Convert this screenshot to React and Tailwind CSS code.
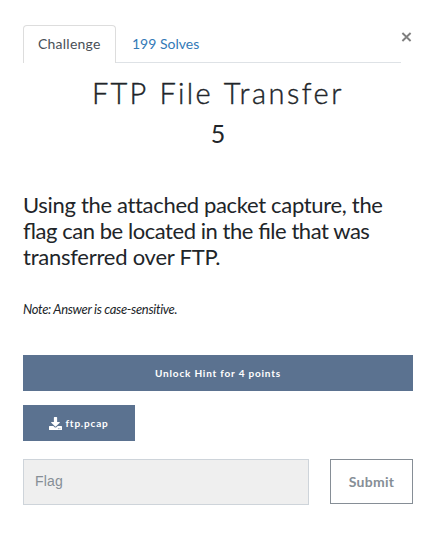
import { FaDownload } from "react-icons/fa";

export default function App() {
  return (
    <main className="h-[541px] w-[436px] overflow-hidden bg-white pl-[23px] pr-[23px] pt-[25px] font-['Lato',sans-serif] text-[#212529]">
      <header className="flex h-[38px]">
        <nav className="flex w-[378px] shrink-0 border-b border-[#dee2e6] text-[14px] leading-[21px]">
          <a className="-mb-px h-[38px] w-[93px] rounded-t-[4px] border border-b-0 border-[#dddddd] bg-white pl-[14px] pt-[7px] tracking-[0.23px] text-[#495057]">
            Challenge
          </a>
          <a className="pl-[16px] pt-[8px] text-[#337ab7]">199 Solves</a>
        </nav>
        <button className="-mt-[1px] flex h-[26px] w-[12px] shrink-0 items-center justify-start text-[#7f7f7f]" aria-label="Close">
          <svg className="h-[10px] w-[11px]" viewBox="0 0 11 10" fill="none" stroke="currentColor" strokeWidth="1.9">
            <path d="M1.4 1l8.2 8M9.6 1L1.4 9" />
          </svg>
        </button>
      </header>
      <h3 className="mt-[12px] whitespace-nowrap text-center text-[29px] font-light leading-[36px] [-webkit-text-stroke:0.4px_#212529] [word-spacing:3px]">
        <span className="tracking-[2.2px]">FTP</span>{" "}
        <span className="tracking-[2.3px]">File</span>{" "}
        <span className="tracking-[2.5px]">Transfer</span>
      </h3>
      <h4 className="mt-[6px] text-center text-[25px] leading-[32px]">5</h4>
      <p className="mt-[43px] whitespace-nowrap text-[22px] leading-[26px]">
        <span className="tracking-[-0.32px]">Using the attached packet capture, the</span>
        <br />
        <span className="tracking-[-0.45px]">
          <span className="[font-feature-settings:'liga']">fl</span>ag can be located in the{" "}
          <span className="[font-feature-settings:'liga']">fi</span>le that was
        </span>
        <br />
        <span className="tracking-[-0.24px]">transferred over FTP.</span>
      </p>
      <p className="mt-[29px] text-[13px] italic leading-[20px] tracking-[-0.33px]">Note: Answer is case-sensitive.</p>
      <button className="mt-[36px] flex h-[36px] w-[390px] items-center justify-center bg-[#5b7290] text-[10px] font-bold tracking-[0.8px] text-white">
        Unlock Hint for 4 points
      </button>
      <button className="mt-[14px] flex h-[36px] w-[112px] items-center justify-center gap-[3px] bg-[#5b7290] text-[10px] font-bold tracking-[0.8px] text-white">
        <FaDownload className="h-[13px] w-[13px]" />
        ftp.pcap
      </button>
      <form className="mt-[18px] flex gap-[21px]">
        <input
          placeholder="Flag"
          className="h-[46px] w-[286px] border border-[#ced4da] bg-[#efefef] px-[11px] pb-[2px] font-['Liberation_Sans',sans-serif] text-[14px] tracking-[0.2px] placeholder:text-[#868e96]"
        />
        <button type="button" className="h-[45px] w-[83px] border border-[#868e96] text-[14px] font-bold tracking-[0.3px] text-[#868e96]">
          Submit
        </button>
      </form>
    </main>
  );
}
